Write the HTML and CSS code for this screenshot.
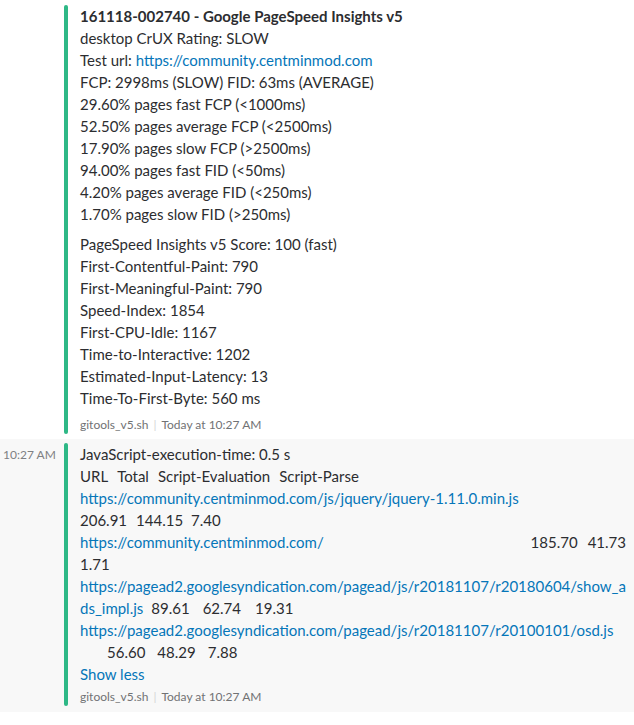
FILE: index.html
```html
<!DOCTYPE html>
<html>
<head>
<meta charset="utf-8">
<link rel="stylesheet" href="styles.css">
</head>
<body>
<div class="msg msg-first">
  <div class="gutter"></div>
  <div class="attachment">
    <div class="bar"></div>
    <div class="att-body">
      <div class="block">
        <div class="line title">161118-002740 - Google PageSpeed Insights v5</div>
        <div class="line">desktop CrUX Rating: SLOW</div>
        <div class="line">Test url: <a href="#">https://community.centminmod.com</a></div>
        <div class="line">FCP: 2998ms (SLOW) FID: 63ms (AVERAGE)</div>
        <div class="line">29.60% pages fast FCP (&lt;1000ms)</div>
        <div class="line">52.50% pages average FCP (&lt;2500ms)</div>
        <div class="line">17.90% pages slow FCP (&gt;2500ms)</div>
        <div class="line">94.00% pages fast FID (&lt;50ms)</div>
        <div class="line">4.20% pages average FID (&lt;250ms)</div>
        <div class="line">1.70% pages slow FID (&gt;250ms)</div>
      </div>
      <div class="block block-gap">
        <div class="line">PageSpeed Insights v5 Score: 100 (fast)</div>
        <div class="line">First-Contentful-Paint: 790</div>
        <div class="line">First-Meaningful-Paint: 790</div>
        <div class="line">Speed-Index: 1854</div>
        <div class="line">First-CPU-Idle: 1167</div>
        <div class="line">Time-to-Interactive: 1202</div>
        <div class="line">Estimated-Input-Latency: 13</div>
        <div class="line">Time-To-First-Byte: 560 ms</div>
      </div>
      <div class="footer footer-first">gitools_v5.sh<span class="sep">|</span>Today at 10:27 AM</div>
    </div>
  </div>
</div>
<div class="msg msg-second">
  <div class="gutter"><span class="ts">10:27 AM</span></div>
  <div class="attachment">
    <div class="bar"></div>
    <div class="att-body">
      <div class="block">
        <div class="line">JavaScript-execution-time: 0.5 s</div>
        <div class="line">URL<span class="g9">Total</span><span class="g9">Script-Evaluation</span><span class="g9">Script-Parse</span></div>
        <div class="line"><a href="#">https://community.centminmod.com/js/jquery/jquery-1.11.0.min.js</a></div>
        <div class="line">206.91<span class="g9">144.15</span><span class="g8">7.40</span></div>
        <div class="line split"><a href="#">https://community.centminmod.com/</a><span class="nums">185.70<span class="g10">41.73</span></span></div>
        <div class="line">1.71</div>
        <div class="line"><a href="#">https://pagead2.googlesyndication.com/pagead/js/r20181107/r20180604/show_a</a></div>
        <div class="line"><a href="#">ds_impl.js</a><span class="g8">89.61</span><span class="g13">62.74</span><span class="g14">19.31</span></div>
        <div class="line"><a href="#">https://pagead2.googlesyndication.com/pagead/js/r20181107/r20100101/osd.js</a></div>
        <div class="line indent">56.60<span class="g12">48.29</span><span class="g12">7.88</span></div>
        <div class="line"><a href="#">Show less</a></div>
      </div>
      <div class="footer">gitools_v5.sh<span class="sep">|</span>Today at 10:27 AM</div>
    </div>
  </div>
</div>
</body>
</html>
```
FILE: styles.css
```css
html, body {
  margin: 0;
  padding: 0;
  background: #ffffff;
}
body {
  font-family: Lato, "Noto Sans", sans-serif;
  font-size: 15px;
  color: #2c2d30;
  width: 634px;
}
a {
  color: #0576b9;
  text-decoration: none;
}
.msg {
  display: flex;
}
.msg-first {
  padding-top: 5px;
}
.msg-second {
  margin-top: 5px;
  background: #f8f8f8;
  padding: 4px 0 6px 0;
}
.gutter {
  width: 64px;
  flex: none;
  box-sizing: border-box;
  padding-left: 3px;
}
.ts {
  display: block;
  font-size: 12px;
  line-height: 22px;
  color: #7f8083;
  padding-top: 1px;
}
.attachment {
  display: flex;
  flex: 1;
}
.bar {
  width: 4px;
  flex: none;
  background: #2eb886;
  border-radius: 2px;
}
.att-body {
  padding-left: 12px;
  flex: 1;
  min-width: 0;
}
.line {
  line-height: 22px;
  white-space: nowrap;
}
.title {
  font-weight: bold;
}
.block-gap {
  margin-top: 8px;
}
.footer {
  font-size: 12px;
  line-height: 16px;
  color: #717274;
  margin-top: 4px;
  padding-bottom: 1px;
}
.footer-first {
  margin-top: 8px;
}
.sep {
  color: #d5d5d6;
  margin: 0 5px;
}
.split {
  display: flex;
}
.nums {
  margin-left: auto;
  margin-right: 8px;
}
.indent {
  padding-left: 27px;
}
.g8 { margin-left: 8px; }
.g9 { margin-left: 9px; }
.g10 { margin-left: 10px; }
.g12 { margin-left: 12px; }
.g13 { margin-left: 13px; }
.g14 { margin-left: 14px; }
```
